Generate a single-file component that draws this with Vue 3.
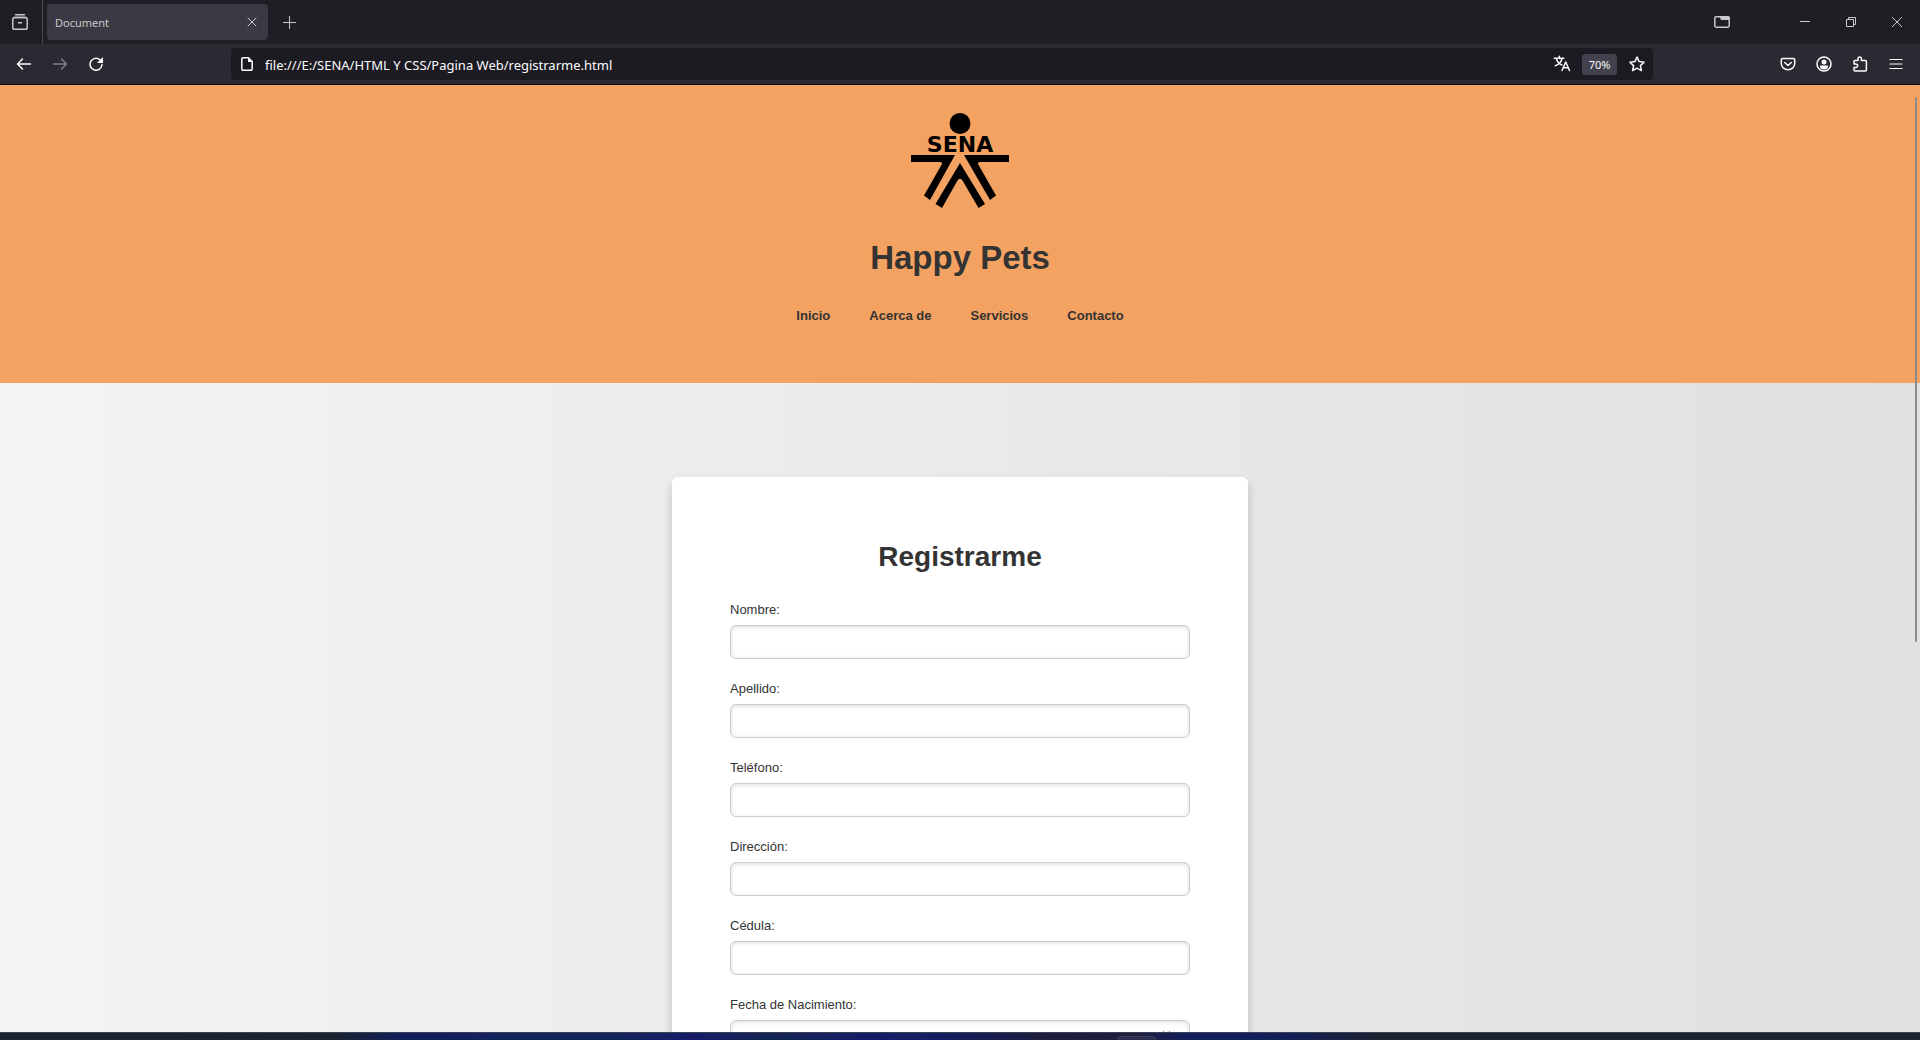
<script setup>
import { ref } from 'vue'

const address = ref('file:///E:/SENA/HTML Y CSS/Pagina Web/registrarme.html')

const links = ['Inicio', 'Acerca de', 'Servicios', 'Contacto']

const fields = [
  { id: 'nombre', label: 'Nombre:', type: 'text' },
  { id: 'apellido', label: 'Apellido:', type: 'text' },
  { id: 'telefono', label: 'Teléfono:', type: 'tel' },
  { id: 'direccion', label: 'Dirección:', type: 'text' },
  { id: 'cedula', label: 'Cédula:', type: 'text' },
  { id: 'nacimiento', label: 'Fecha de Nacimiento:', type: 'date' }
]
</script>

<template>
  <div class="window">
    <div class="tabbar">
      <button class="view" type="button" aria-label="Firefox View">
        <svg width="16" height="16" viewBox="0 0 16 16">
          <path d="M3.5 .8h9M2.2 3.5h11.6" />
          <rect x=".8" y="3.6" width="14.4" height="11.6" rx="1.8" />
          <path d="M6.500 8.800h3" />
        </svg>
      </button>
      <div class="tab">
        <span class="tab-title">Document</span>
        <button class="tab-close" type="button" aria-label="Cerrar pestaña">
          <svg width="8" height="8" viewBox="0 0 8 8"><path d="M0 0l8 8M8 0L0 8" /></svg>
        </button>
      </div>
      <button class="new-tab" type="button" aria-label="Nueva pestaña">
        <svg width="13" height="13" viewBox="0 0 13 13"><path d="M6.5 .5v12M.5 6.5h12" /></svg>
      </button>
      <button class="tool tabs-list" type="button" aria-label="Ventanas">
        <svg width="16" height="12" viewBox="0 0 16 12">
          <rect x=".8" y=".8" width="14.4" height="10.4" rx="1.4" />
          <path d="M5.500 .5h10v3.500H7z" fill="#c9c9cd" stroke="none" />
        </svg>
      </button>
      <button class="control" type="button" aria-label="Minimizar">
        <svg width="10" height="10" viewBox="0 0 10 10"><path d="M0 4.500h10" /></svg>
      </button>
      <button class="control" type="button" aria-label="Restaurar">
        <svg width="10" height="10" viewBox="0 0 10 10">
          <path d="M.5 2.500h7v7h-7zM2.500 2.500v-2h7v7h-2" />
        </svg>
      </button>
      <button class="control" type="button" aria-label="Cerrar">
        <svg width="10" height="10" viewBox="0 0 10 10"><path d="M0 0l10 10M10 0L0 10" /></svg>
      </button>
    </div>

    <div class="toolbar">
      <button class="tool" type="button" aria-label="Atrás">
        <svg width="16" height="16" viewBox="0 0 16 16"><path d="M14.500 8H1.500M6.500 3L1.500 8L6.500 13" /></svg>
      </button>
      <button class="tool" type="button" aria-label="Adelante" disabled>
        <svg width="16" height="16" viewBox="0 0 16 16"><path d="M1.500 8h13M9.500 3L14.500 8L9.500 13" /></svg>
      </button>
      <button class="tool" type="button" aria-label="Recargar">
        <svg width="16" height="16" viewBox="0 0 16 16">
          <path d="M14 8.500A6 6 0 1 1 12 3.800" />
          <path d="M15 1v6H9z" fill="#fbfbfe" stroke="none" />
        </svg>
      </button>
      <div class="urlbar">
        <svg class="page-icon" width="12" height="14" viewBox="0 0 12 14">
          <path d="M7.500 .8H2A1.200 1.200 0 0 0 .8 2v10A1.200 1.200 0 0 0 2 13.200h8a1.200 1.200 0 0 0 1.200-1.200V4.500z" />
          <path d="M7 .5v4.500h4.500z" fill="#fbfbfe" stroke="none" />
        </svg>
        <input v-model="address" class="address" type="text" aria-label="Dirección web" />
        <button class="url-tool" type="button" aria-label="Traducir">
          <svg width="16" height="16" viewBox="0 0 16 16">
            <path d="M.3 2.300h9.500M5.300 .3v2M2.300 2.300C3 5.500 5.500 8 8 9M8 2.300C7.500 5.500 4.500 8.500 1.300 9.800M8 14.500L11.700 6l3.800 8.500M9.300 11.800h4.800" />
          </svg>
        </button>
        <button class="zoom-level" type="button">70%</button>
        <button class="url-tool" type="button" aria-label="Marcador">
          <svg width="16" height="16" viewBox="0 0 16 16">
            <path d="M8 1l2.100 4.600 5 .6-3.700 3.400 1 5L8 12.200l-4.400 2.400 1-5L.9 6.200l5-.6z" />
          </svg>
        </button>
      </div>
      <button class="tool" type="button" aria-label="Pocket">
        <svg width="16" height="16" viewBox="0 0 16 16">
          <path d="M2.500 2.500h11A1.200 1.200 0 0 1 14.700 3.700V7.500A6.700 6.200 0 0 1 1.300 7.500V3.700A1.200 1.200 0 0 1 2.500 2.500zM4.700 6.500L8 9.500l3.300-3" />
        </svg>
      </button>
      <button class="tool" type="button" aria-label="Cuenta">
        <svg width="16" height="16" viewBox="0 0 16 16">
          <circle cx="8" cy="8" r="7" />
          <circle cx="8" cy="6" r="2.500" fill="#fbfbfe" stroke="none" />
          <path d="M4 9.500h8v1A4 3 0 0 1 4 10.500z" fill="#fbfbfe" stroke="none" />
        </svg>
      </button>
      <button class="tool" type="button" aria-label="Extensiones">
        <svg width="16" height="16" viewBox="0 0 16 16">
          <path d="M2 8V5.500A1 1 0 0 1 3 4.500h3V2.600a1.700 1.700 0 0 1 3.400 0v1.900h4A1 1 0 0 1 14.400 5.500v8.500a1 1 0 0 1-1 1H3a1 1 0 0 1-1-1v-2.500h2a1.700 1.700 0 0 0 0-3.400z" />
        </svg>
      </button>
      <button class="tool" type="button" aria-label="Menú">
        <svg width="12" height="12" viewBox="0 0 12 12"><path d="M0 1.500h12M0 6h12M0 10.500h12" stroke-width="1.200" /></svg>
      </button>
    </div>

    <div class="viewport">
      <header class="header">
        <svg class="logo" width="98" height="96" viewBox="0 0 98 96" role="img" aria-label="SENA">
          <circle cx="49" cy="10.500" r="10.500" />
          <text x="49" y="39" text-anchor="middle">SENA</text>
          <path d="M0 42H44L19 87L13 82.500L31 51Q31.500 49 29 49H0z" />
          <path d="M98 42H53L79 87L85 82.500L67 51Q66.500 49 69 49H98z" />
          <path d="M49 50L74 91L67.500 95L51.500 67.500Q49 64 46.500 67.500L31 95L24.500 91z" />
        </svg>
        <h1>Happy Pets</h1>
        <nav>
          <a v-for="link in links" :key="link" href="#">{{ link }}</a>
        </nav>
      </header>

      <main>
        <form class="card" @submit.prevent>
          <h2>Registrarme</h2>
          <div v-for="field in fields" :key="field.id" class="field">
            <label :for="field.id">{{ field.label }}</label>
            <input :id="field.id" :name="field.id" :type="field.type" />
          </div>
        </form>
      </main>
      <div class="scroll-thumb"></div>
    </div>

    <div class="taskbar"><span class="task-item"></span></div>
  </div>
</template>

<style>
body {
  margin: 0;
  overflow: hidden;
}
</style>

<style scoped>
.window {
  display: flex;
  flex-direction: column;
  height: 100vh;
  font-family: "Liberation Sans", Arial, sans-serif;
  color: #333;
}

button {
  display: flex;
  align-items: center;
  justify-content: center;
  flex: none;
  padding: 0;
  border: 0;
  background: none;
  color: #fbfbfe;
}

svg {
  display: block;
  flex: none;
  overflow: visible;
}

button svg,
.page-icon {
  fill: none;
  stroke: #fbfbfe;
  stroke-width: 1.5;
  stroke-linecap: round;
  stroke-linejoin: round;
}

.tabbar {
  display: flex;
  align-items: center;
  flex: none;
  height: 44px;
  background: #1f1e25;
  font-family: "Noto Sans", "Open Sans", sans-serif;
}

.tabbar svg {
  stroke: #c9c9cd;
}

.view {
  width: 43px;
  height: 44px;
  padding-right: 2px;
  border-right: 1px solid #4a4953;
}

.tab {
  display: flex;
  align-items: center;
  justify-content: space-between;
  box-sizing: border-box;
  width: 221px;
  height: 36px;
  margin-left: 4px;
  padding: 0 4px 0 8px;
  border-radius: 4px;
  background: #3b3943;
}

.tab-title {
  padding-top: 2px;
  color: #c9c9cd;
  font-size: 11px;
  line-height: 20px;
}

.tab-close {
  width: 24px;
  height: 24px;
}

.tab-close svg,
.new-tab svg {
  stroke-width: 1;
}

.new-tab {
  width: 32px;
  height: 32px;
  margin-left: 5px;
}

.tabs-list {
  margin-left: auto;
  margin-right: 42px;
}

.control {
  width: 46px;
  height: 44px;
}

.control svg {
  stroke-width: 1;
  stroke-linecap: butt;
  stroke-linejoin: miter;
}

.toolbar {
  display: flex;
  align-items: center;
  flex: none;
  height: 40px;
  padding: 0 6px;
  border-bottom: 1px solid #0c0c0d;
  background: #2b2a33;
}

.tool {
  width: 36px;
  height: 32px;
}

.tool:disabled {
  opacity: 0.4;
}

.urlbar {
  display: flex;
  align-items: center;
  flex: 1;
  height: 32px;
  margin: 0 117px;
  border-radius: 4px;
  background: #1c1b22;
}

.page-icon {
  margin: 0 12px 0 10px;
}

.address {
  flex: 1;
  min-width: 0;
  padding: 2px 0 0;
  border: 0;
  outline: 0;
  background: none;
  color: #fbfbfe;
  font-family: "Noto Sans", "Open Sans", sans-serif;
  font-size: 13px;
  line-height: 20px;
}

.url-tool {
  width: 32px;
  height: 32px;
}

.zoom-level {
  width: 35px;
  height: 21px;
  margin: 0 4px;
  border-radius: 3px;
  background: #42414d;
  font-family: "Noto Sans", "Open Sans", sans-serif;
  font-size: 11px;
}

.viewport {
  position: relative;
  flex: 1;
  min-height: 0;
  overflow: hidden;
  background: linear-gradient(to right, #f4f4f4, #e0e0e0);
}

.header {
  display: flex;
  flex-direction: column;
  align-items: center;
  padding: 28px 0 57px;
  background: #f4a261;
}

.logo {
  fill: #000;
}

.logo text {
  font-family: "DejaVu Sans", Verdana, sans-serif;
  font-size: 22px;
  font-weight: bold;
}

h1 {
  margin: 29px 0 28px;
  font-size: 33px;
  line-height: 40px;
}

nav {
  display: flex;
  gap: 39px;
}

nav a {
  color: #333;
  font-size: 13px;
  font-weight: bold;
  line-height: 20px;
  text-decoration: none;
}

main {
  padding-top: 94px;
}

.card {
  box-sizing: border-box;
  width: 30%;
  margin: 0 auto;
  padding: 64px 58px;
  border-radius: 6px;
  background: #fff;
  box-shadow: 0 6px 11px rgba(0, 0, 0, 0.2);
}

h2 {
  margin: 0 0 27px;
  font-size: 28px;
  line-height: 32px;
  text-align: center;
}

.field {
  display: flex;
  flex-direction: column;
  gap: 5px;
  margin-bottom: 20px;
}

.field label {
  font-size: 13px;
  line-height: 20px;
}

.field input {
  box-sizing: border-box;
  width: 100%;
  height: 34px;
  padding: 0 14px;
  border: 1px solid #ccc;
  border-radius: 6px;
  background: #fff;
  box-shadow: inset 0 1px 4px rgba(0, 0, 0, 0.15);
  color: #333;
  font-family: inherit;
  font-size: 13px;
}

.scroll-thumb {
  position: absolute;
  top: 12px;
  right: 3px;
  width: 2px;
  height: 57.5%;
  border-radius: 1px;
  background: #8b8b8b;
}

.taskbar {
  display: flex;
  flex: none;
  height: 7px;
  overflow: hidden;
  border-top: 1px solid #3c4254;
  background: linear-gradient(to right, #1c222b 0, #1c242e 17%, #12205c 21%, #13245a 32%, #161c68 36%, #132552 40%, #141e68 45%, #141f62 49%, #1e1f40 54%, #1f1f3c 59%, #12205c 62%, #12205a 67%, #1c222e 72%, #1c222b 100%);
}

.task-item {
  box-sizing: border-box;
  width: 39px;
  height: 12px;
  margin: 3px 0 0 58.2%;
  border: 1px solid #3f4060;
  border-radius: 4px;
  background: #2c2c4c;
}
</style>
